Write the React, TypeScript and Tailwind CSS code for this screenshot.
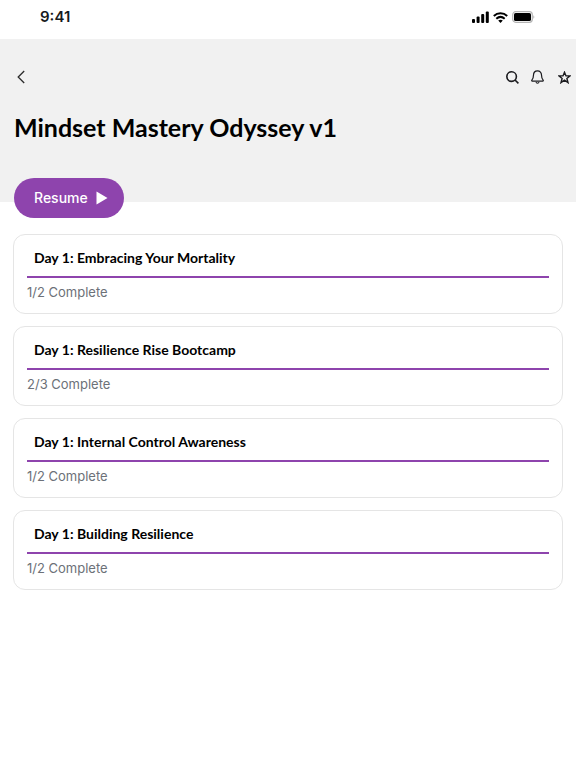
const lessons = [
  { id: 1, title: "Day 1: Embracing Your Mortality", done: 1, total: 2 },
  { id: 2, title: "Day 1: Resilience Rise Bootcamp", done: 2, total: 3 },
  { id: 3, title: "Day 1: Internal Control Awareness", done: 1, total: 2 },
  { id: 4, title: "Day 1: Building Resilience", done: 1, total: 2 },
];

function StatusBar() {
  return (
    <div className="flex h-[39px] items-start justify-between pt-2 pr-[41px] pl-10">
      <span className="text-[15px] leading-[18px] font-semibold text-[#171a20]">9:41</span>
      <div className="flex h-[18px] items-center gap-1 text-black">
        <svg width="17" height="12" viewBox="0 0 17 12" fill="currentColor">
          <rect x="0" y="8" width="3" height="4" rx="1" />
          <rect x="4.6" y="5.6" width="3" height="6.4" rx="1" />
          <rect x="9.2" y="3" width="3" height="9" rx="1" />
          <rect x="13.8" y="0.5" width="3" height="11.5" rx="1" />
        </svg>
        <svg width="15" height="11" viewBox="0 0 15 11" fill="none" stroke="currentColor" strokeWidth="2">
          <path d="M0.8 4C4.6 0.4 10.4 0.4 14.2 4" />
          <path d="M3.3 6.7C5.8 4.5 9.2 4.5 11.7 6.7" />
          <path d="M5.2 8.5C6.5 7.4 8.5 7.4 9.8 8.5L7.5 10.9Z" fill="currentColor" stroke="none" />
        </svg>
        <svg width="23" height="12" viewBox="0 0 23 12">
          <rect x="0.7" y="0.7" width="19.6" height="10.6" rx="3" fill="none" stroke="#b5b5b5" strokeWidth="1.2" />
          <rect x="2" y="2" width="17" height="8" rx="1.6" fill="currentColor" />
          <path d="M21.3 4.2C22.7 4.8 22.7 7.2 21.3 7.8Z" fill="#b5b5b5" />
        </svg>
      </div>
    </div>
  );
}

export default function App() {
  return (
    <div className="min-h-screen bg-white font-['Inter',sans-serif]">
      <StatusBar />
      <header className="flex flex-col bg-[#f1f1f1] pt-7 pr-[5px] pl-[14px]">
        <div className="flex h-5 items-center justify-between">
          <button aria-label="Back" className="flex size-[14px] items-center justify-center">
            <svg width="8" height="14" viewBox="0 0 8 14" fill="none" stroke="#2b2b2b" strokeWidth="1.3">
              <path d="M7.2 1L1.2 7L7.2 13" />
            </svg>
          </button>
          <div className="flex items-center gap-3 text-[#1b1b1f]">
            <button aria-label="Search">
              <svg width="13" height="13" viewBox="0 0 13 13" fill="none" stroke="currentColor" strokeWidth="1.6">
                <circle cx="5.6" cy="5.6" r="4.8" />
                <path d="M9 9L12.4 12.4" />
              </svg>
            </button>
            <button aria-label="Notifications" className="pr-[2px]">
              <svg width="13" height="14" viewBox="0 0 13 14" fill="none" stroke="currentColor" strokeWidth="1.2">
                <path d="M6.5 0.8C4 0.8 2.5 2.7 2.5 5C2.5 8.2 1.9 8.9 0.8 10.3C0.6 10.7 0.7 11.1 1.2 11.1H11.8C12.3 11.1 12.4 10.7 12.2 10.3C11.1 8.9 10.5 8.2 10.5 5C10.5 2.7 9 0.8 6.5 0.8Z" />
                <path d="M5 12.2C5.4 13.6 7.6 13.6 8 12.2" />
              </svg>
            </button>
            <button aria-label="Favourite">
              <svg width="13" height="13" viewBox="0 0 13 13" fill="none" stroke="currentColor" strokeWidth="1.4">
                <path d="M6.5 1.2L8 4.9H12L8.9 7.4L10 11.6L6.5 9.2L3 11.6L4.1 7.4L1 4.9H5Z" />
              </svg>
            </button>
          </div>
        </div>
        <h1 className="pt-6 font-['Lato',sans-serif] text-[25px] leading-8 font-bold text-black">
          Mindset Mastery Odyssey v1
        </h1>
        {/* button hangs over the bottom edge of the header */}
        <button className="mt-[35px] -mb-4 flex h-10 items-center gap-2 self-start rounded-full bg-[#8e44ad] pr-4 pl-5 text-sm font-medium text-white">
          Resume
          <svg width="12" height="14" viewBox="0 0 12 14" fill="currentColor">
            <path d="M0.5 0.5L11.5 7L0.5 13.5Z" />
          </svg>
        </button>
      </header>
      <main className="flex flex-col gap-3 px-[13px] pt-8">
        {lessons.map((lesson) => (
          <section
            key={lesson.id}
            className="rounded-xl border border-[#e5e5e5] px-[13px] py-[11px]"
          >
            <h2 className="px-[7px] font-['Lato',sans-serif] text-sm leading-6 font-bold text-black">
              {lesson.title}
            </h2>
            <div className="mt-[6px] h-[2px] bg-[#8e44ad]" />
            <p className="mt-1 text-[13px] leading-5 text-[#6c7178]">
              {lesson.done}/{lesson.total} Complete
            </p>
          </section>
        ))}
      </main>
    </div>
  );
}
